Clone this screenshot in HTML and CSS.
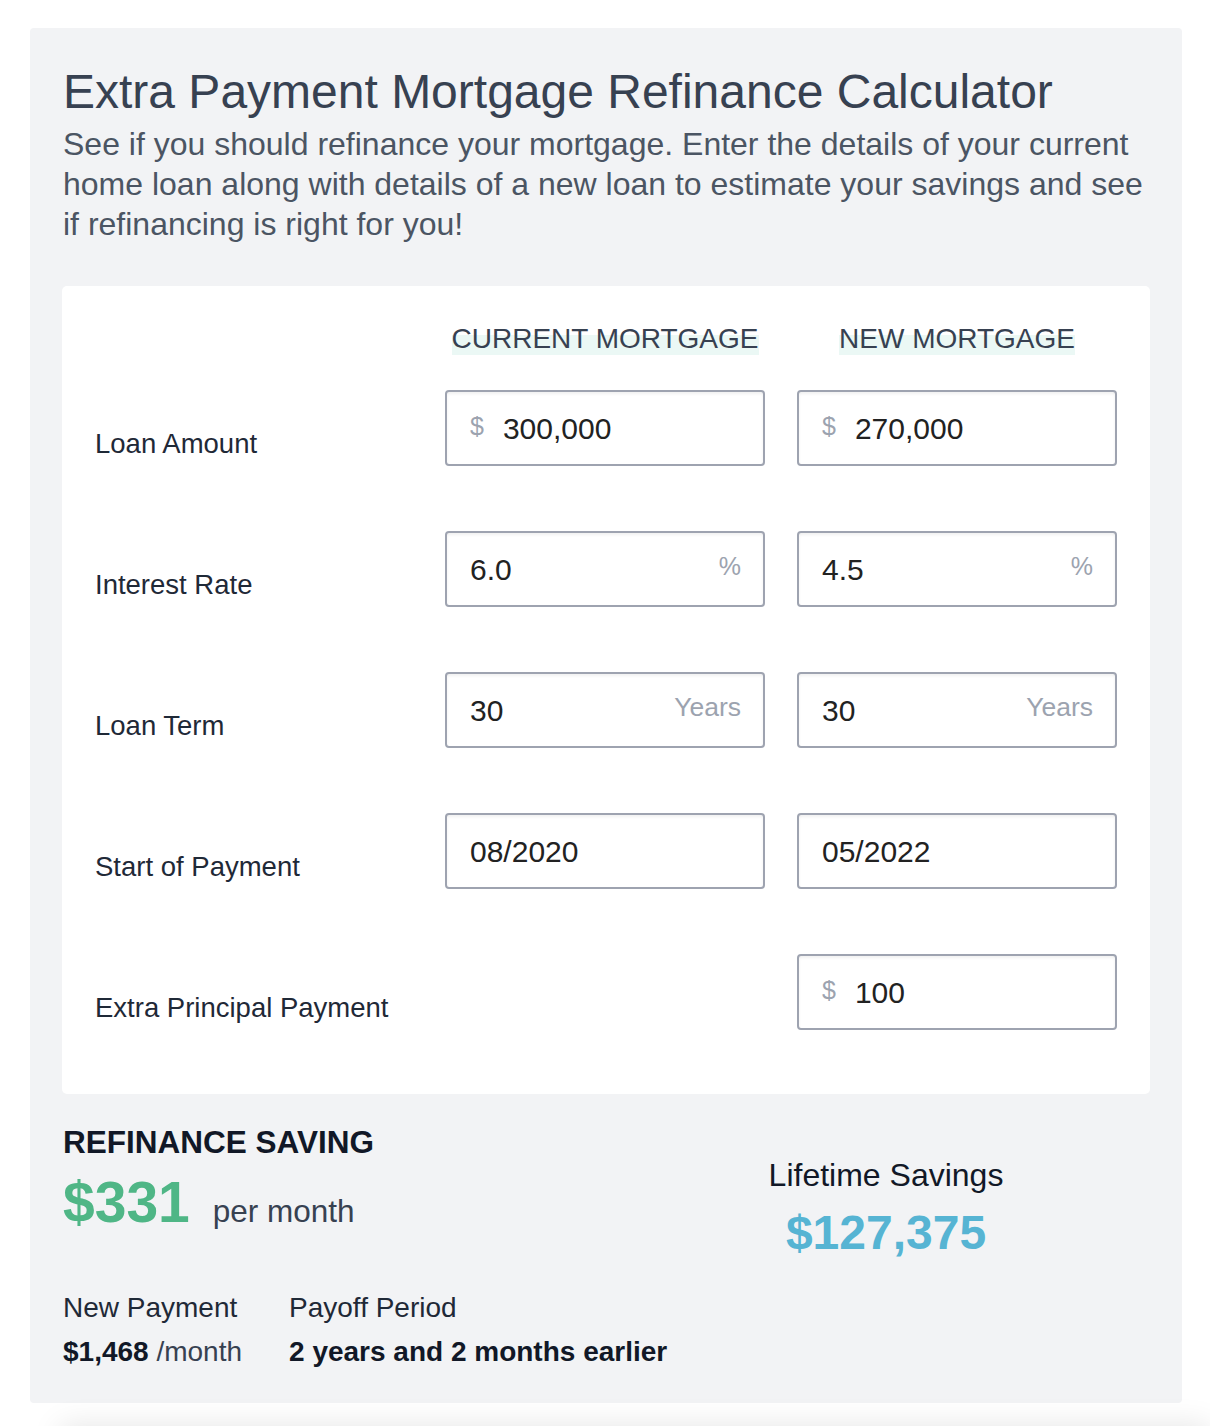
FILE: index.html
```html
<!DOCTYPE html>
<html lang="en">
<head>
<meta charset="utf-8">
<title>Extra Payment Mortgage Refinance Calculator</title>
<link rel="stylesheet" href="styles.css">
</head>
<body>
<main class="calc">
  <h1 class="calc-title">Extra Payment Mortgage Refinance Calculator</h1>
  <p class="calc-desc">See if you should refinance your mortgage. Enter the details of your current home loan along with details of a new loan to estimate your savings and see if refinancing is right for you!</p>

  <section class="form-card">
    <div class="form-head">
      <div></div>
      <div class="col-head"><span class="hl">CURRENT MORTGAGE</span></div>
      <div class="col-head"><span class="hl">NEW MORTGAGE</span></div>
    </div>
    <div class="form-grid">
      <div class="label">Loan Amount</div>
      <div class="field"><span class="prefix">$</span><span class="value">300,000</span></div>
      <div class="field"><span class="prefix">$</span><span class="value">270,000</span></div>

      <div class="label">Interest Rate</div>
      <div class="field"><span class="value">6.0</span><span class="suffix">%</span></div>
      <div class="field"><span class="value">4.5</span><span class="suffix">%</span></div>

      <div class="label">Loan Term</div>
      <div class="field"><span class="value">30</span><span class="suffix suffix-word">Years</span></div>
      <div class="field"><span class="value">30</span><span class="suffix suffix-word">Years</span></div>

      <div class="label">Start of Payment</div>
      <div class="field"><span class="value">08/2020</span></div>
      <div class="field"><span class="value">05/2022</span></div>

      <div class="label">Extra Principal Payment</div>
      <div></div>
      <div class="field"><span class="prefix">$</span><span class="value">100</span></div>
    </div>
  </section>

  <section class="results">
    <div class="saving">
      <h2 class="saving-title">REFINANCE SAVING</h2>
      <div class="saving-main">
        <span class="saving-amount">$331</span>
        <span class="saving-unit">per month</span>
      </div>
      <div class="details">
        <div class="detail">
          <div class="detail-label">New Payment</div>
          <div class="detail-value"><strong>$1,468</strong> /month</div>
        </div>
        <div class="detail">
          <div class="detail-label">Payoff Period</div>
          <div class="detail-value"><strong>2 years and 2 months earlier</strong></div>
        </div>
      </div>
    </div>
    <div class="lifetime">
      <div class="lifetime-label">Lifetime Savings</div>
      <div class="lifetime-amount">$127,375</div>
    </div>
  </section>
</main>
<div class="page-foot"></div>
</body>
</html>
```

FILE: styles.css
```css
* { box-sizing: border-box; }

html, body {
  margin: 0;
  padding: 0;
  background: #ffffff;
}

body {
  font-family: "Liberation Sans", Arial, Helvetica, sans-serif;
  color: #111827;
  overflow: hidden;
}

.calc {
  width: 1152px;
  margin: 28px 0 0 30px;
  padding: 36px 33px 34px 33px;
  background: #f2f3f5;
  border-radius: 4px;
}

.calc-title {
  margin: 0;
  font-size: 48px;
  line-height: 56px;
  font-weight: 400;
  color: #374151;
}

.calc-desc {
  margin: 4px 0 0 0;
  font-size: 32px;
  line-height: 40px;
  color: #4b5563;
}

.form-card {
  margin-top: 42px;
  margin-left: -1px;
  width: 1088px;
  background: #ffffff;
  border-radius: 5px;
  padding: 36px 33px 64px 33px;
}

.form-head,
.form-grid {
  display: grid;
  grid-template-columns: 1fr 320px 320px;
  column-gap: 32px;
}

.form-head {
  margin-bottom: 34px;
}

.form-grid {
  row-gap: 65px;
}

.col-head {
  text-align: center;
  font-size: 28px;
  line-height: 34px;
  color: #374151;
}

.hl {
  background: linear-gradient(to bottom, transparent 36%, #ebf8f5 36%, #ebf8f5 100%);
  padding-bottom: 1px;
}

.label {
  align-self: end;
  font-size: 27.5px;
  line-height: 34px;
  padding-bottom: 5px;
  color: #1f2937;
}

.field {
  height: 76px;
  display: flex;
  align-items: center;
  border: 2px solid #9ea3b0;
  border-radius: 4px;
  background: #ffffff;
  box-shadow: inset 0 2px 3px rgba(0, 0, 0, 0.06);
  padding: 0 22px 0 23px;
}

.value {
  flex: 1;
  font-size: 30px;
  line-height: 36px;
  color: #222222;
  padding-top: 2px;
}

.prefix {
  font-size: 25px;
  line-height: 30px;
  color: #9ca3af;
  margin-right: 19px;
  margin-bottom: 4px;
}

.suffix {
  font-size: 25px;
  line-height: 30px;
  color: #9ca3af;
  margin-bottom: 6px;
}

.suffix-word {
  font-size: 26.5px;
}

.results {
  display: grid;
  grid-template-columns: minmax(0, 1fr) 526px;
  margin-top: 29px;
}

.saving {
  min-width: 0;
}

.saving-title {
  margin: 0;
  font-size: 31.5px;
  line-height: 38px;
  font-weight: 700;
  color: #111827;
  white-space: nowrap;
}

.saving-main {
  display: flex;
  align-items: baseline;
  gap: 23px;
  margin-top: 9px;
}

.saving-amount {
  font-size: 57px;
  line-height: 64px;
  font-weight: 700;
  color: #4fb686;
}

.saving-unit {
  font-size: 31.5px;
  line-height: 38px;
  color: #374151;
}

.details {
  display: flex;
  gap: 47px;
  margin-top: 57px;
}

.detail {
  flex: none;
  white-space: nowrap;
}

.detail-label {
  font-size: 28px;
  line-height: 34px;
  color: #1f2937;
}

.detail-value {
  margin-top: 10px;
  font-size: 28px;
  line-height: 34px;
  color: #374151;
}

.detail-value strong {
  font-weight: 700;
  color: #111827;
}

.lifetime {
  padding-top: 33px;
  text-align: center;
}

.lifetime-label {
  font-size: 32px;
  line-height: 38px;
  color: #111827;
}

.lifetime-amount {
  margin-top: 11px;
  font-size: 48px;
  line-height: 56px;
  font-weight: 700;
  color: #56b4d3;
}

.page-foot {
  height: 60px;
  margin-top: 32px;
  margin-left: 60px;
  background: #ffffff;
  box-shadow: 0 -10px 30px rgba(0, 0, 0, 0.1);
}
```
